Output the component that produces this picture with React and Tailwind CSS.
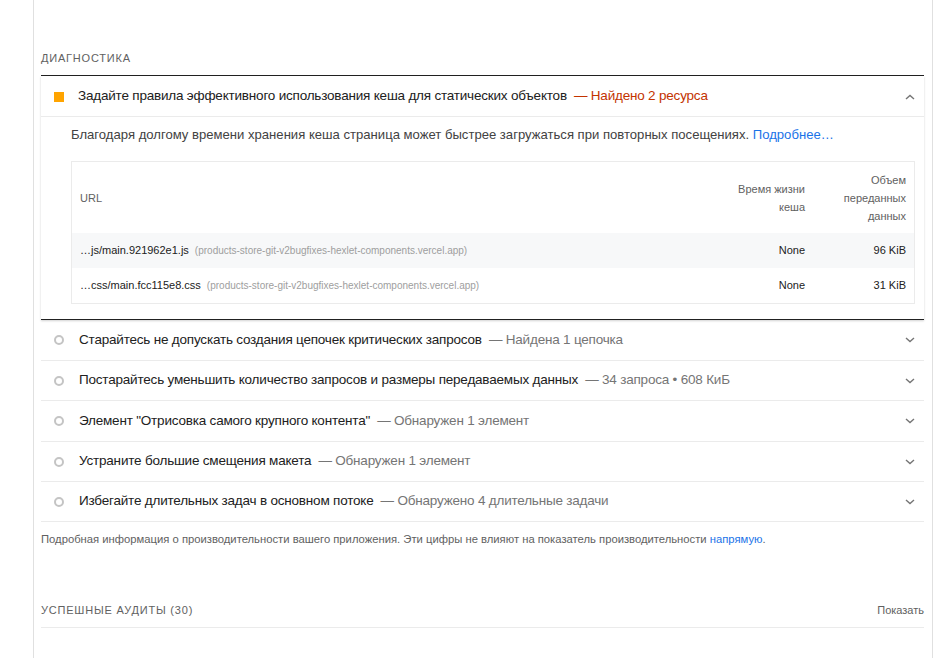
const collapsed = [
  { title: 'Старайтесь не допускать создания цепочек критических запросов', note: 'Найдена 1 цепочка', h: 'h-[41px]' },
  { title: 'Постарайтесь уменьшить количество запросов и размеры передаваемых данных', note: '34 запроса • 608 КиБ', h: 'h-[40px]' },
  { title: 'Элемент "Отрисовка самого крупного контента"', note: 'Обнаружен 1 элемент', h: 'h-[41px]' },
  { title: 'Устраните большие смещения макета', note: 'Обнаружен 1 элемент', h: 'h-[40px]' },
  { title: 'Избегайте длительных задач в основном потоке', note: 'Обнаружено 4 длительные задачи', h: 'h-[40px]' },
];

const resources = [
  { url: '…js/main.921962e1.js', ttl: 'None', size: '96 KiB', bg: 'bg-[#f7f8f9]' },
  { url: '…css/main.fcc115e8.css', ttl: 'None', size: '31 KiB', bg: 'bg-white' },
];

function Chevron({ up }) {
  return (
    <svg width="10" height="6" viewBox="0 0 10 6" className="shrink-0">
      <polyline
        points={up ? '1,5 5,1.5 9,5' : '1,1 5,4.5 9,1'}
        fill="none"
        stroke="#757575"
        strokeWidth="1.4"
      />
    </svg>
  );
}

export default function App() {
  return (
    <div className="h-[658px] bg-white overflow-hidden font-['Liberation_Sans',Arial,sans-serif] text-[#212121]">
      <div className="ml-[33px] w-[900px] h-full border-l border-r border-[#e0e0e0] pl-[7px] pr-[8px]">

        {/* DIAGNOSTICS */}
        <div className="pt-[50px] pb-[9px] leading-[16px] text-[11px] tracking-[0.8px] uppercase text-[#616161] border-b border-[#212121]">
          Диагностика
        </div>

        {/* expanded audit */}
        <div className="border-b border-[#212121] shadow-[0_1px_2px_rgba(0,0,0,0.18)]">
          <div className="h-[41px] pt-[1px] flex items-center border-b border-[#ebebeb]">
            <div className="ml-[13px] w-[10px] h-[10px] bg-[#ffa400] shrink-0" />
            <div className="ml-[14px] flex-1 text-[13.5px] tracking-[-0.2px]">
              Задайте правила эффективного использования кеша для статических объектов
              <span className="text-[#c33300]">&nbsp; — Найдено 2 ресурса</span>
            </div>
            <div className="mr-[9px]"><Chevron up /></div>
          </div>

          <p className="ml-[30px] pt-[8px] leading-[20px] text-[13.1px] text-[#424242]">
            Благодаря долгому времени хранения кеша страница может быстрее загружаться при повторных посещениях.{' '}
            <span className="text-[#1a73e8]">Подробнее…</span>
          </p>

          <div className="ml-[30px] mr-[9px] mt-[16px] mb-[15px] border border-[#ebebeb]">
            <div className="flex h-[71px] items-center text-[11px] leading-[18px] text-[#616161]">
              <div className="flex-1 pl-[8px]">URL</div>
              <div className="w-[100px] pr-[8px] text-right">Время жизни<br />кеша</div>
              <div className="w-[101px] pr-[8px] text-right">Объем<br />переданных<br />данных</div>
            </div>
            {resources.map(r => (
              <div key={r.url} className={`flex h-[35px] items-center text-[11px] ${r.bg}`}>
                <div className="flex-1 pl-[8px] whitespace-nowrap">
                  {r.url}
                  <span className="ml-[6px] text-[10px] text-[#9e9e9e]">(products-store-git-v2bugfixes-hexlet-components.vercel.app)</span>
                </div>
                <div className="w-[100px] pr-[8px] text-right">{r.ttl}</div>
                <div className="w-[101px] pr-[8px] text-right">{r.size}</div>
              </div>
            ))}
          </div>
        </div>

        {/* collapsed audits */}
        {collapsed.map(a => (
          <div key={a.title} className={`${a.h} flex items-center border-b border-[#ebebeb]`}>
            <div className="ml-[13px] w-[10px] h-[10px] rounded-full border-2 border-[#c4c4c4] shrink-0" />
            <div className="ml-[15px] flex-1 text-[13.5px] tracking-[-0.2px]">
              {a.title}
              <span className="text-[#757575]">&nbsp; — {a.note}</span>
            </div>
            <div className="mr-[9px]"><Chevron /></div>
          </div>
        ))}

        <p className="mt-[9px] leading-[16px] text-[11.25px] text-[#616161]">
          Подробная информация о производительности вашего приложения. Эти цифры не влияют на показатель производительности{' '}
          <span className="text-[#1a73e8]">напрямую</span>.
        </p>

        {/* passed audits */}
        <div className="mt-[55px] pb-[9px] flex justify-between leading-[16px] text-[11px] border-b border-[#ebebeb]">
          <span className="tracking-[0.8px] uppercase text-[#616161]">Успешные аудиты (30)</span>
          <span className="text-[#616161]">Показать</span>
        </div>
      </div>
    </div>
  );
}
